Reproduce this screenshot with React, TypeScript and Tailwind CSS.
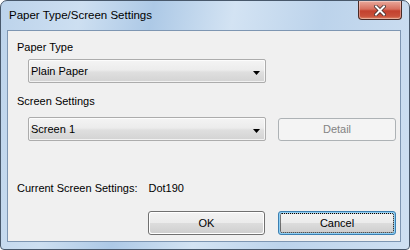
// @ts-nocheck
import React from 'react';

const font = { fontFamily: '"Segoe UI", "Liberation Sans", Arial, sans-serif' };

function Combo({ value }) {
    return (
        <div className="flex items-center w-[238px] h-[24px] border border-[#acacac] rounded-[2px] bg-[linear-gradient(#f4f4f4,#ececec_45%,#dfdfdf_55%,#d3d3d3)] shadow-[inset_0_0_0_1px_rgba(255,255,255,0.7)]">
            <span className="flex-1 pl-[2px] text-[11px] leading-[14px] text-black">{value}</span>
            <svg width="7" height="4" viewBox="0 0 7 4" className="mr-[5px] mt-[3px]">
                <path d="M0 0H7L3.5 4Z" fill="#000" />
            </svg>
        </div>
    );
}

function Button({ label, focused = false, disabled = false, w = 'w-[118px]' }) {
    if (disabled) {
        return (
            <div className={`${w} h-[23px] flex items-center justify-center border border-[#adb2b5] rounded-[3px] bg-[#f4f4f4] text-[11px] text-[#838383]`}>
                {label}
            </div>
        );
    }
    return (
        <div className={`${w} h-[24px] p-[1px] border rounded-[3px] ${focused ? 'border-[#3c7fb1] bg-[#8fd0f5]' : 'border-[#707070] bg-white'}`}>
            <div className={`h-full flex items-center justify-center rounded-[2px] text-[11px] text-black bg-[linear-gradient(#f2f2f2,#ebebeb_50%,#dddddd_50%,#cfcfcf)] ${focused ? 'border border-dotted border-black' : ''}`}>
                {label}
            </div>
        </div>
    );
}

export default function App() {
    return (
        <div style={font} className="w-[410px] h-[250px] flex flex-col border border-[#48586b] rounded-t-[7px] rounded-b-[4px] bg-[linear-gradient(100deg,#bcd3eb_0%,#cddff1_18%,#adc9e6_34%,#d3e3f3_52%,#bcd3eb_72%,#cfe0f2_100%)] overflow-hidden">
            {/* Title bar */}
            <div className="h-[29px] flex items-start justify-between">
                <span className="ml-[8px] mt-[7px] text-[11.5px] leading-[14px] text-black">Paper Type/Screen Settings</span>
                <div className="mr-[7px] w-[44px] h-[19px] flex items-center justify-center border border-t-0 border-[#4a2a25] rounded-b-[4px] bg-[linear-gradient(#e9a99c,#d7705f_45%,#c3412e_55%,#c9513b_85%,#e08a6a)] shadow-[inset_0_0_0_1px_rgba(255,255,255,0.35)]">
                    <svg width="12" height="11" viewBox="0 0 12 11">
                        <path d="M2 1.5L10 9.5M10 1.5L2 9.5" stroke="#3b2a2a" strokeWidth="3.6" strokeLinecap="square" />
                        <path d="M2 1.5L10 9.5M10 1.5L2 9.5" stroke="#fff" strokeWidth="2" strokeLinecap="square" />
                    </svg>
                </div>
            </div>

            {/* Client area */}
            <div className="ml-[6px] w-[394px] h-[212px] border border-[#7e96b2] bg-[#f0f0f0] flex flex-col pl-[9px] pt-[8px] text-[11px] text-black">
                <div className="h-[16px] leading-[16px]">Paper Type</div>
                <div className="mt-[4px] ml-[11px]">
                    <Combo value="Plain Paper" />
                </div>
                <div className="mt-[10px] h-[16px] leading-[16px]">Screen Settings</div>
                <div className="mt-[8px] ml-[11px] flex items-center gap-[12px]">
                    <Combo value="Screen 1" />
                    <Button label="Detail" disabled />
                </div>
                <div className="mt-[39px] h-[16px] leading-[16px] flex">
                    <span>Current Screen Settings:</span>
                    <span className="ml-[11px]">Dot190</span>
                </div>
                <div className="mt-[15px] flex justify-end gap-[13px] pr-[4px]">
                    <Button label="OK" w="w-[117px]" />
                    <Button label="Cancel" focused />
                </div>
            </div>
        </div>
    );
}
